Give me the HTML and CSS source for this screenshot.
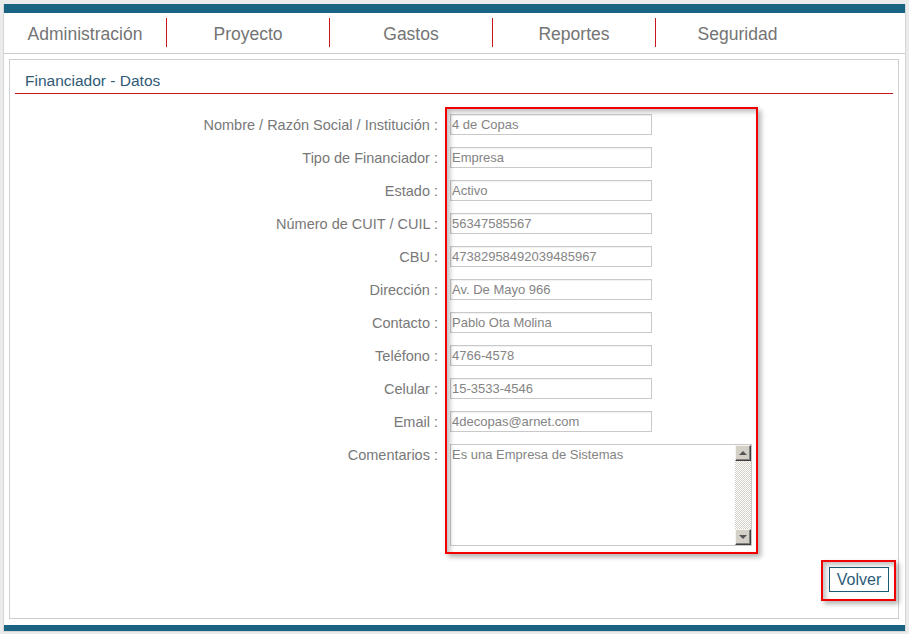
FILE: index.html
```html
<!DOCTYPE html>
<html lang="es">
<head>
<meta charset="utf-8">
<title>Financiador - Datos</title>
<link rel="stylesheet" href="styles.css">
</head>
<body>
<div class="frame">
  <div class="topbar"></div>
  <nav class="nav">
    <div class="nav-item sep">Administración</div>
    <div class="nav-item sep">Proyecto</div>
    <div class="nav-item sep">Gastos</div>
    <div class="nav-item sep">Reportes</div>
    <div class="nav-item">Seguridad</div>
  </nav>
  <div class="panel">
    <div class="title"><span>Financiador - Datos</span></div>
    <div class="form">
      <div class="row"><label class="lbl">Nombre / Razón Social / Institución :</label><div class="field">4 de Copas</div></div>
      <div class="row"><label class="lbl">Tipo de Financiador :</label><div class="field">Empresa</div></div>
      <div class="row"><label class="lbl">Estado :</label><div class="field">Activo</div></div>
      <div class="row"><label class="lbl">Número de CUIT / CUIL :</label><div class="field">56347585567</div></div>
      <div class="row"><label class="lbl">CBU :</label><div class="field">47382958492039485967</div></div>
      <div class="row"><label class="lbl">Dirección :</label><div class="field">Av. De Mayo 966</div></div>
      <div class="row"><label class="lbl">Contacto :</label><div class="field">Pablo Ota Molina</div></div>
      <div class="row"><label class="lbl">Teléfono :</label><div class="field">4766-4578</div></div>
      <div class="row"><label class="lbl">Celular :</label><div class="field">15-3533-4546</div></div>
      <div class="row"><label class="lbl">Email :</label><div class="field">4decopas@arnet.com</div></div>
      <div class="row row-ta"><label class="lbl">Comentarios :</label>
        <div class="textarea">
          <div class="ta-text">Es una Empresa de Sistemas</div>
          <div class="scrollbar">
            <div class="sb-btn"><span class="tri-up"></span></div>
            <div class="sb-track"></div>
            <div class="sb-btn"><span class="tri-down"></span></div>
          </div>
        </div>
      </div>
    </div>
    <div class="actions"><button class="btn">Volver</button></div>
  </div>
  <div class="bottombar"></div>
</div>
<div class="hl hl-form"></div>
<div class="hl hl-btn"></div>
</body>
</html>
```
FILE: styles.css
```css
* { box-sizing: border-box; }
html, body { margin: 0; padding: 0; }
body {
  background: #ebebeb;
  padding: 4px 3px 0 3px;
  font-family: "Liberation Sans", Arial, sans-serif;
  position: relative;
  height: 634px;
  overflow: hidden;
}
.frame {
  width: 903px;
  background: #fff;
  border: 1px solid #d6d6d6;
  border-top: 0;
}
.topbar { height: 9px; background: #1a6383; }
.nav {
  display: flex;
  height: 41px;
  border-bottom: 1px solid #cfcfcf;
}
.nav-item {
  width: 163px;
  height: 29px;
  margin-top: 5px;
  line-height: 33px;
  text-align: center;
  font-size: 17.5px;
  color: #747474;
}
.nav-item.sep { border-right: 1px solid #c8161e; }
.panel {
  margin: 5px 6px 6px 5px;
  border: 1px solid #cfcfcf;
  height: 560px;
}
.title {
  margin: 0 5px;
  padding: 12px 0 3px 10px;
  border-bottom: 1px solid #c8141b;
  font-size: 15.5px;
  line-height: 18px;
  color: #2f5a76;
}
.form {
  padding-top: 20px;
  display: flex;
  flex-direction: column;
  gap: 12px;
}
.row {
  display: flex;
  align-items: center;
  gap: 12px;
  height: 21px;
}
.row-ta { height: 101px; align-items: flex-start; }
.lbl {
  width: 428px;
  text-align: right;
  font-size: 14.5px;
  color: #787878;
  line-height: 17px;
  padding-top: 2px;
}
.row-ta .lbl { padding-top: 3px; }
.field {
  width: 202px;
  height: 21px;
  border: 1px solid #c9c9c9;
  box-shadow: inset 1px 1px 1px rgba(0,0,0,0.06);
  padding: 1px 1px;
  font-size: 13px;
  line-height: 17px;
  color: #848484;
  white-space: nowrap;
}
.textarea {
  width: 302px;
  height: 102px;
  border: 1px solid #c9c9c9;
  display: flex;
}
.ta-text {
  flex: 1;
  padding: 1px 1px;
  font-size: 13px;
  line-height: 17px;
  color: #848484;
}
.scrollbar {
  width: 16px;
  display: flex;
  flex-direction: column;
}
.sb-btn {
  height: 16px;
  background: #d4d0c8;
  border-top: 1px solid #f4f3ee;
  border-left: 1px solid #f4f3ee;
  border-right: 1px solid #404040;
  border-bottom: 1px solid #404040;
  box-shadow: inset -1px -1px 0 #808080;
  display: flex;
  align-items: center;
  justify-content: center;
}
.sb-track {
  flex: 1;
  background-color: #fff;
  background-image: repeating-conic-gradient(#d4d0c8 0 25%, #ffffff 0 50%);
  background-size: 2px 2px;
}
.tri-up, .tri-down {
  width: 0; height: 0;
  border-left: 4px solid transparent;
  border-right: 4px solid transparent;
}
.tri-up { border-bottom: 4px solid #555; }
.tri-down { border-top: 4px solid #555; }
.actions {
  display: flex;
  justify-content: flex-end;
  padding: 22px 9px 0 0;
}
.btn {
  width: 60px;
  height: 25px;
  border: 1px solid #1d5a74;
  background: #fff;
  font-family: "Liberation Sans", Arial, sans-serif;
  font-size: 16px;
  line-height: 23px;
  color: #2c5b78;
  padding: 0;
}
.bottombar { height: 6px; background: #1a6383; }
.hl {
  position: absolute;
  border: 2px solid #f20000;
  box-shadow: 3px 3px 5px rgba(0,0,0,0.3), inset 3px 3px 5px rgba(0,0,0,0.25);
}
.hl-form { left: 445px; top: 107px; width: 313px; height: 447px; }
.hl-btn { left: 821px; top: 560px; width: 75px; height: 41px; }
```
